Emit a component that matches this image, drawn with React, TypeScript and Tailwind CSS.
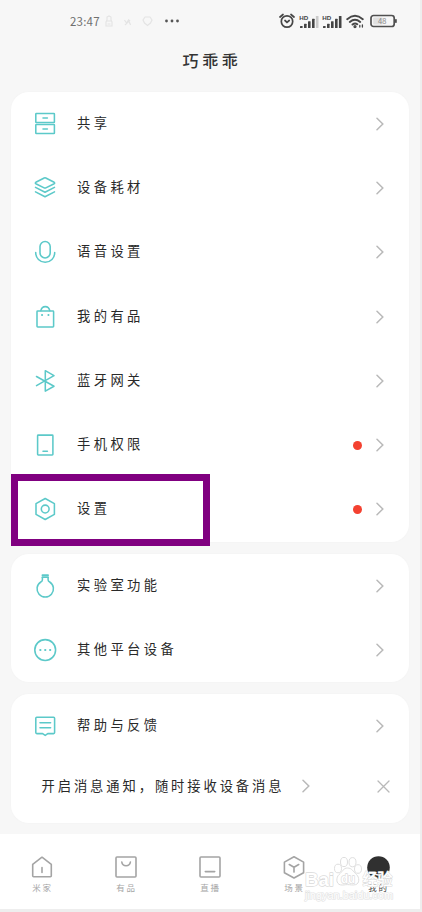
import type { ReactNode } from "react";

const teal = "#5cc9c9";

function Glyph({ children }: { children: ReactNode }) {
  return (
    <svg width="24" height="24" viewBox="0 0 24 24" fill="none" stroke={teal} strokeWidth="1.55" strokeLinecap="round" strokeLinejoin="round" className="block shrink-0">
      {children}
    </svg>
  );
}

const icons: Record<string, ReactNode> = {
  share: (
    <Glyph>
      <rect x="2.8" y="1.5" width="18.6" height="9" rx="0.6" />
      <rect x="2.8" y="12.5" width="18.6" height="9" rx="0.6" />
      <path d="M10 6h4.4M10 17h4.4" />
    </Glyph>
  ),
  layers: (
    <Glyph>
      <path d="M12 1.8Q12.3 1.8 12.8 2L21.2 6.3Q22.2 7 21.2 7.7L12.8 11.9Q12 12.2 11.2 11.9L2.8 7.7Q1.8 7 2.8 6.3L11.2 2Q11.7 1.8 12 1.8Z" />
      <path d="M2.5 11.4l9.5 4.8 9.5-4.8M2.5 15.9l9.5 4.9 9.5-4.9" />
    </Glyph>
  ),
  mic: (
    <Glyph>
      <rect x="7" y="1.5" width="10.2" height="16.4" rx="5.1" />
      <path d="M2.7 12.6c0 5.5 4.2 9.6 9.5 9.6s9.5-4.1 9.5-9.6" />
    </Glyph>
  ),
  bag: (
    <Glyph>
      <rect x="4" y="6" width="16.6" height="16" rx="0.7" />
      <path d="M7.8 5.7c.6-2.7 2.2-4.1 4.5-4.1s3.900 1.400 4.500 4.100" />
      <path d="M9 10h.1M15.400 10h.1" strokeWidth="2" />
    </Glyph>
  ),
  bluetooth: (
    <Glyph>
      <path d="M3.500 7.500L21 17.200l-8.700 4.900V1.700L21 6.700 3.500 16.600" />
    </Glyph>
  ),
  phone: (
    <Glyph>
      <rect x="4.600" y="2.100" width="15.300" height="19.800" rx="0.700" />
      <path d="M10 18.200h4.400" />
    </Glyph>
  ),
  settings: (
    <Glyph>
      <path d="M12.200 1.500l9.200 5.200v10.600l-9.200 5.200L3 17.300V6.700z" />
      <circle cx="12.200" cy="12" r="3.900" />
    </Glyph>
  ),
  flask: (
    <Glyph>
      <path d="M9.400 1.200h5.700M9.400 3.200h5.700" strokeWidth="1.700" />
      <path d="M9.400 3.500v2.200Q9.400 7.200 7.800 8A8.200 8.200 0 1 0 16.700 8Q15.100 7.200 15.100 5.700V3.500" />
    </Glyph>
  ),
  more: (
    <Glyph>
      <circle cx="12.200" cy="12" r="10.400" />
      <path d="M7.300 12h.1M12.200 12h.1M17.100 12h.1" strokeWidth="2.200" />
    </Glyph>
  ),
  feedback: (
    <Glyph>
      <path d="M3.800 3.300h16.800q1 0 1 1v14.300q0 1-1 1h-5.800l-2.600 1.800-2.600-1.800H3.800q-1 0-1-1V4.300q0-1 1-1z" />
      <path d="M7 8.700h10.600M7 13.800h10.600" />
    </Glyph>
  ),
};

function Chevron() {
  return (
    <svg width="8" height="14" viewBox="0 0 8 14" fill="none" stroke="#b9b9b9" strokeWidth="1.5" strokeLinecap="round" className="block">
      <path d="M1 1.300L6.800 7 1 12.700" />
    </svg>
  );
}

function Row({ icon, label, dot, marked }: { icon: string; label: string; dot?: boolean; marked?: boolean }) {
  return (
    <div className="relative flex h-[64.3px] items-center pl-[21.5px] pr-[25px]">
      {icons[icon]}
      <span className="ml-[20.5px] flex-1 whitespace-nowrap pb-[2px] text-[13.3px] leading-5 tracking-[3.4px] text-[#292929]">{label}</span>
      {dot && <span className="mr-[14px] size-[9px] rounded-full bg-[#f44130]" />}
      <Chevron />
      {marked && <div className="absolute -top-[3px] left-0 h-[72px] w-[199px] border-[7px] border-[#800080]" />}
    </div>
  );
}

function Card({ children }: { children: ReactNode }) {
  return <section className="rounded-[18px] bg-white shadow-[0_0_3px_rgba(0,0,0,0.025)]">{children}</section>;
}

function Signal({ faint }: { faint?: boolean }) {
  return (
    <svg width="20" height="15" viewBox="0 0 20 15" className="block font-['Liberation_Sans',sans-serif]">
      <text x="0.3" y="5.8" fontSize="5.600" fontWeight="700" fill="#454545" textLength="9" lengthAdjust="spacingAndGlyphs">HD</text>
      <g fill="#444">
        <rect x="1" y="12" width="2.600" height="2" rx=".5" />
        <rect x="5" y="9.800" width="2.600" height="4.200" rx=".5" />
        <rect x="9" y="7.300" width="2.600" height="6.700" rx=".5" />
        <rect x="13" y="4.800" width="2.600" height="9.200" rx=".5" />
        <rect x="16.900" y="2" width="2.600" height="12" rx=".5" opacity={faint ? 0.25 : 1} />
      </g>
    </svg>
  );
}

function StatusBar() {
  return (
    <header className="flex h-[42px] items-center pl-[70px] pr-[23px]">
      <span className="w-[30px] text-[11.5px] leading-4 tracking-[0.2px] text-[#707070]">23:47</span>
      <svg width="56" height="12" viewBox="0 0 56 12" className="ml-[4px] block" fill="none" stroke="#e4e4e4" strokeWidth="1.200">
        <path d="M3 2l2-1 2 1v3l1 2v4H2V7l1-2zM2 6h6M3.500 9h3M20.500 5l2 3 2-3 2 5M21 10l5-5M41 2h5l2 3-1.500 3-3 2.500-3-2.500L39 5z" />
      </svg>
      <svg width="16" height="4" viewBox="0 0 16 4" fill="#555" className="ml-[4px] block">
        <circle cx="2.500" cy="2" r="1.400" /><circle cx="8" cy="2" r="1.400" /><circle cx="13.500" cy="2" r="1.400" />
      </svg>
      <div className="ml-auto flex items-center">
        <svg width="16" height="16" viewBox="0 0 16 16" fill="none" stroke="#474747" strokeWidth="1.700" strokeLinecap="round" className="block">
          <circle cx="8" cy="8.500" r="5.700" />
          <path d="M1 4l3-2.500M15 4l-3-2.500M6 7.500L8 9.300l2.200-1.800" />
        </svg>
        <div className="ml-[4px]"><Signal faint /></div>
        <div className="ml-[3px]"><Signal /></div>
        <svg width="19" height="15" viewBox="0 0 19 15" fill="none" stroke="#474747" strokeWidth="1.900" strokeLinecap="round" className="ml-[4px] block">
          <path d="M1.200 5.200Q9 -1.600 16.800 5.200M3.800 8Q9 3.600 14.200 8M6.500 10.600Q9 8.600 11.300 10.300" />
          <circle cx="9" cy="12.600" r=".7" fill="#474747" />
          <path d="M13.800 11.500v1.500M16.400 11v2" strokeWidth="1.300" />
        </svg>
        <svg width="27" height="14" viewBox="0 0 27 14" className="ml-[5px] block">
          <rect x="1" y="1.500" width="23.200" height="11" rx="2.500" fill="#f7f7f7" stroke="#505050" strokeWidth="1.700" />
          <rect x="3.200" y="3.500" width="9.500" height="7" rx="1" fill="#e0e0e0" />
          <rect x="25" y="5" width="1.800" height="4" rx=".8" fill="#505050" />
          <text x="8" y="9.800" fontSize="7.500" fill="#8a8a8a">48</text>
        </svg>
      </div>
    </header>
  );
}

const tabs = [
  { label: "米家", art: <path d="M1.700 8.300L11 1.200l9.300 7.100v11.500q0 .9-.9.9H2.600q-.9 0-.9-.9zM11 11.500v5" /> },
  { label: "有品", art: <><rect x="1" y="1" width="20" height="20" rx="1" /><path d="M6.800 6c.6 5 7.900 5 8.600 0" /></> },
  { label: "直播", art: <><rect x="1" y="1" width="20" height="20" rx="1" /><path d="M6.300 15.600h9.400" /></> },
  { label: "场景", art: <path d="M11 .8l9.600 5.300v10.600L11 22l-9.600-5.300V6.100zM6.300 8.500L11 11.300l4.700-2.800M11 11.300v4.800" /> },
];

function TabBar() {
  return (
    <nav className="relative grid h-[75px] grid-cols-5 bg-white pt-[22px]">
      {tabs.map((t) => (
        <div key={t.label} className="flex flex-col items-center">
          <svg width="22" height="23" viewBox="0 0 22 23" fill="none" stroke="#a4a4a4" strokeWidth="1.600" strokeLinecap="round" strokeLinejoin="round" className="block">{t.art}</svg>
          <span className="mt-[2px] pl-[1px] text-[8.5px] leading-3 tracking-[1.8px] text-[#a5a5a5]">{t.label}</span>
        </div>
      ))}
      <div className="flex flex-col items-center">
        <svg width="23" height="23" viewBox="0 0 23 23" className="block">
          <circle cx="11.500" cy="11.500" r="11.300" fill="#303030" />
          <path d="M7 17.500q4.500 3 9 0" fill="none" stroke="#fff" strokeWidth="1.300" />
        </svg>
        <span className="mt-[2px] pl-[1px] text-[8.5px] leading-3 tracking-[1.8px] text-[#444]">我的</span>
      </div>
      <svg width="94" height="50" viewBox="0 0 94 50" className="absolute left-[303px] top-[22px] font-['Liberation_Sans','Noto_Sans_CJK_SC',sans-serif]" fill="#fff" stroke="#dadada" strokeWidth="1" strokeLinejoin="round">
        <g strokeWidth="0.900">
          <ellipse cx="35" cy="12.500" rx="3.500" ry="4.300" />
          <ellipse cx="41" cy="6" rx="3.500" ry="4.600" />
          <ellipse cx="49.500" cy="6.200" rx="3.500" ry="4.600" />
          <ellipse cx="55" cy="13" rx="3.500" ry="4.300" />
          <path d="M44.500 12c-4 0-5 3.600-8.400 6.500-3.200 2.800-3.200 9.600 1.400 10.400 3 .4 4.500-.3 7-.3s5 .8 8 .1c4.300-1 4-7.500 1-10.200-3.500-3-4.500-6.500-9-6.500z" />
        </g>
        <text x="2" y="29.500" fontSize="19" fontWeight="700" strokeWidth="1.300" paintOrder="stroke" textLength="29" lengthAdjust="spacingAndGlyphs">Bai</text>
        <text x="38" y="26.500" fontSize="12.500" fontWeight="700" strokeWidth="1.300" paintOrder="stroke" textLength="14" lengthAdjust="spacingAndGlyphs">du</text>
        <text x="59.500" y="28.800" fontSize="16" fontWeight="500" strokeWidth="1.100" paintOrder="stroke" textLength="30" lengthAdjust="spacingAndGlyphs">经验</text>
        <text x="2" y="42.500" fontSize="10.500" stroke="#e2e2e2" strokeWidth="1.200" paintOrder="stroke" textLength="88" lengthAdjust="spacingAndGlyphs">jingyan.baidu.com</text>
      </svg>
    </nav>
  );
}

export default function App() {
  return (
    <div className="flex h-[912px] w-[422px] flex-col overflow-hidden bg-[#eeeeee] font-['Noto_Sans_CJK_SC',sans-serif]">
      <div className="flex w-[420px] flex-1 flex-col bg-[#f7f7f7]">
        <StatusBar />
        <h1 className="flex h-[49.5px] items-center justify-center pb-[14px] pl-[4px] text-[16px] font-medium tracking-[3.7px] text-[#333]">巧乖乖</h1>
        <main className="flex flex-1 flex-col gap-[12px] px-[11px]">
          <Card>
            <Row icon="share" label="共享" />
            <Row icon="layers" label="设备耗材" />
            <Row icon="mic" label="语音设置" />
            <Row icon="bag" label="我的有品" />
            <Row icon="bluetooth" label="蓝牙网关" />
            <Row icon="phone" label="手机权限" dot />
            <Row icon="settings" label="设置" dot marked />
          </Card>
          <Card>
            <Row icon="flask" label="实验室功能" />
            <Row icon="more" label="其他平台设备" />
          </Card>
          <Card>
            <Row icon="feedback" label="帮助与反馈" />
            <div className="flex h-[65px] items-center pb-[9px] pl-[30.5px] pr-[19.5px]">
              <span className="w-[260px] whitespace-nowrap pb-[1px] text-[13.3px] leading-5 tracking-[2.9px] text-[#292929]">开启消息通知，随时接收设备消息</span>
              <Chevron />
              <svg width="13" height="13" viewBox="0 0 13 13" fill="none" stroke="#b9b9b9" strokeWidth="1.300" strokeLinecap="round" className="ml-auto block">
                <path d="M1 1l11 11M12 1L1 12" />
              </svg>
            </div>
          </Card>
        </main>
        <TabBar />
      </div>
      <div className="h-[3px] bg-[#eeeeee]" />
    </div>
  );
}
